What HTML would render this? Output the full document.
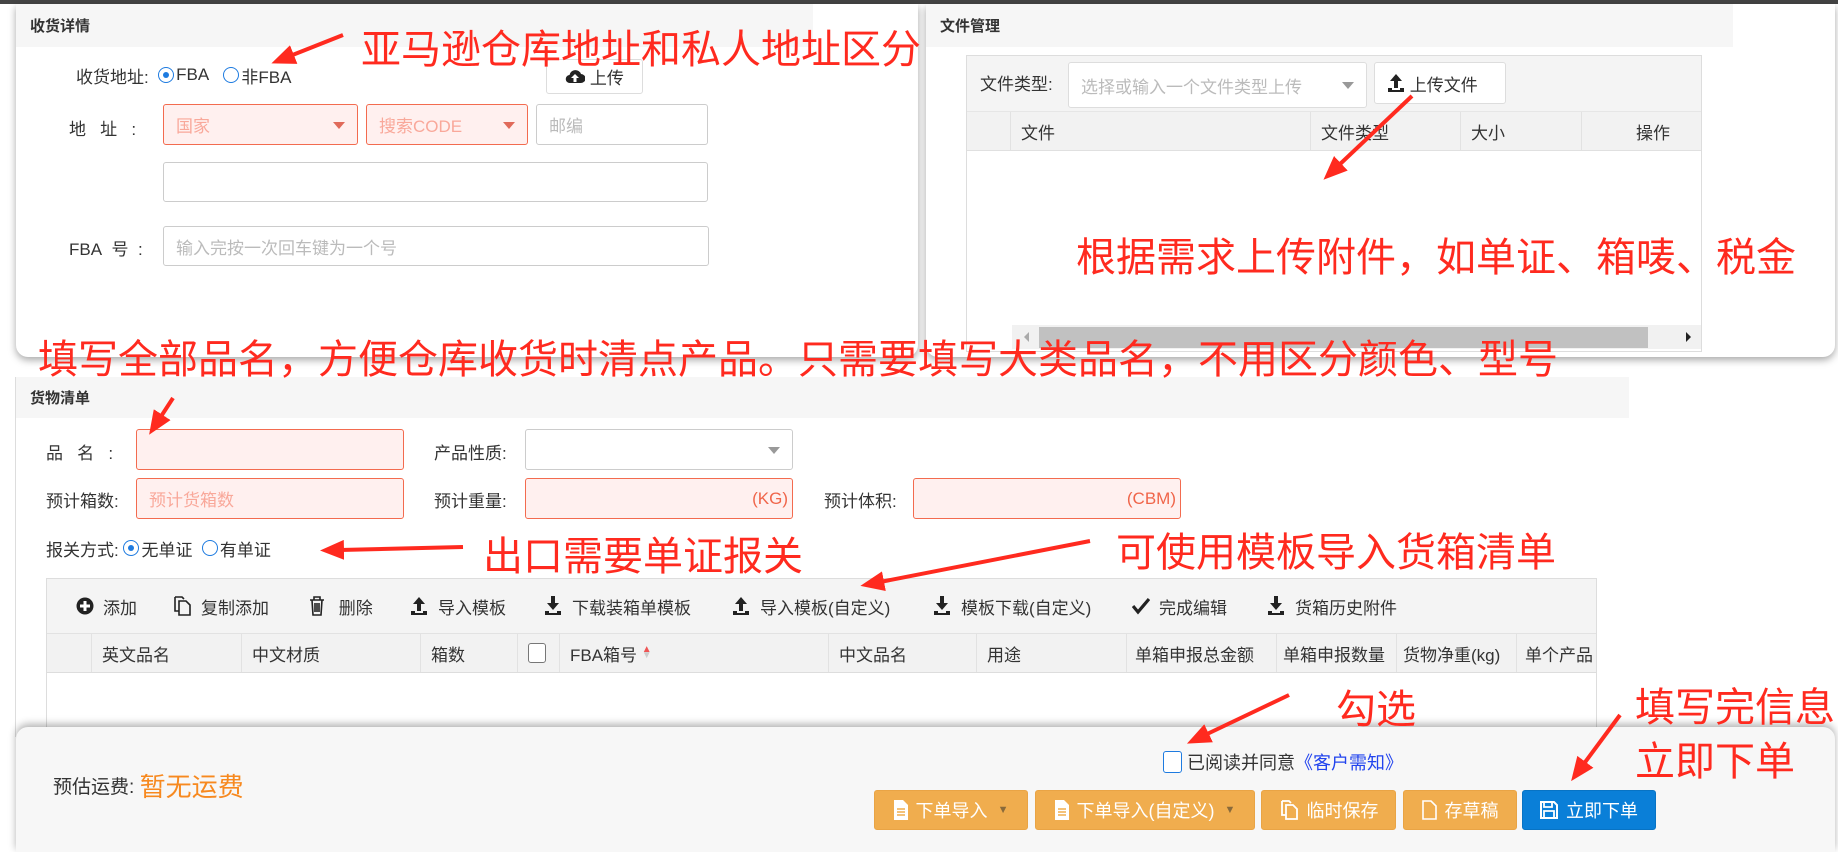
<!DOCTYPE html>
<html><head><meta charset="utf-8"><style>
*{box-sizing:border-box;margin:0;padding:0}
body{width:1838px;height:847px;position:relative;overflow:hidden;background:#fff;font-family:"Liberation Sans","Noto Sans CJK SC",sans-serif;font-size:17px;color:#333}
.a{position:absolute}
.card{position:absolute;background:#fff;border-radius:0 0 12px 12px;box-shadow:0 3px 8px rgba(0,0,0,.35)}
.hd{position:absolute;background:#f6f6f6;font-size:15px;font-weight:bold;color:#333;padding-left:14px;display:flex;align-items:center}
.inp{position:absolute;border:1px solid #ccc;border-radius:3px;background:#fff;color:#bbb;font-size:17px;display:flex;align-items:center;padding-left:12px;white-space:nowrap}
.err{border-color:#f36b4f;background:#fff0ef;color:#f9a89a}
.caret{position:absolute;right:12px;top:50%;margin-top:-3px;width:0;height:0;border-left:6px solid transparent;border-right:6px solid transparent;border-top:7px solid #999}
.err .caret{border-top-color:#e06a5a}
.rad{display:inline-block;width:16px;height:16px;border:1.5px solid #1e7be0;border-radius:50%;vertical-align:-2px;margin-right:2px;position:relative}
.rad.on::after{content:"";position:absolute;left:3.5px;top:3.5px;width:6px;height:6px;border-radius:50%;background:#1e7be0}
.red{position:absolute;color:#ff2a1f;font-size:40px;white-space:nowrap;line-height:1}
.th{position:absolute;top:0;height:100%;border-left:1px solid #e2e2e2;display:flex;align-items:center;padding-left:10px;font-size:17px;color:#333;white-space:nowrap}
.tb{position:absolute;font-size:17px;color:#333;display:flex;align-items:center;white-space:nowrap}
.tb svg{margin-right:9px}
.btn{position:absolute;top:790px;height:40px;background:#f0ad4e;border:1px solid #e9a445;border-radius:3px;color:#fff;font-size:18px;display:flex;align-items:center;justify-content:center;white-space:nowrap}
.btn svg{margin-right:8px}
</style></head><body>
<div class="a" style="left:0;top:0;width:1838px;height:4px;background:#444"></div>

<div class="card" style="left:16px;top:4px;width:902px;height:353px"></div>
<div class="hd" style="left:16px;top:4px;width:797px;height:43px">收货详情</div>
<div class="tb" style="left:76px;top:64px;height:22px">收货地址:&nbsp;&nbsp;<span class="rad on"></span>FBA&nbsp;&nbsp;&nbsp;<span class="rad"></span>非FBA</div>
<div class="inp" style="left:546px;top:59px;width:97px;height:35px;color:#333;justify-content:center;padding:0;border-color:#ddd"><svg width="20" height="18" viewBox="0 0 20 18"><path d="M5 15a4 4 0 0 1-.5-8A6 6 0 0 1 16 6a4.5 4.5 0 0 1 0 9z" fill="#222"/><path d="M10 6l-4 4h2.5v4h3v-4H14z" fill="#fff"/></svg>&nbsp;上传</div>
<div class="tb" style="left:69px;top:116px;height:22px">地&nbsp;&nbsp;&nbsp;址&nbsp;&nbsp;&nbsp;:</div>
<div class="inp err" style="left:163px;top:104px;width:195px;height:41px">国家<span class="caret"></span></div>
<div class="inp err" style="left:366px;top:104px;width:162px;height:41px">搜索CODE<span class="caret"></span></div>
<div class="inp" style="left:536px;top:104px;width:172px;height:41px">邮编</div>
<div class="inp" style="left:163px;top:162px;width:545px;height:40px"></div>
<div class="tb" style="left:69px;top:236px;height:22px">FBA&nbsp;&nbsp;号&nbsp;&nbsp;:</div>
<div class="inp" style="left:163px;top:226px;width:546px;height:40px">输入完按一次回车键为一个号</div>

<div class="card" style="left:926px;top:4px;width:909px;height:353px"></div>
<div class="hd" style="left:926px;top:4px;width:807px;height:43px">文件管理</div>
<div class="a" style="left:966px;top:55px;width:736px;height:297px;border:1px solid #ddd;background:#fff"></div>
<div class="a" style="left:967px;top:56px;width:734px;height:55px;background:#f4f4f4"></div>
<div class="tb" style="left:980px;top:71px;height:22px">文件类型:</div>
<div class="inp" style="left:1068px;top:62px;width:299px;height:46px;border-color:#ddd">选择或输入一个文件类型上传<span class="caret"></span></div>
<div class="inp" style="left:1374px;top:62px;width:132px;height:42px;color:#333;border-color:#ddd;background:#fff"><svg width="18" height="20" viewBox="0 0 18 20"><path d="M9 1L3 8h4v7h4V8h4z" fill="#222"/><path d="M1 15h4v2h8v-2h4v4H1z" fill="#222"/></svg>&nbsp;上传文件</div>
<div class="a" style="left:967px;top:111px;width:734px;height:40px;background:#f2f2f2;border-top:1px solid #e6e6e6;border-bottom:1px solid #e0e0e0">
<div class="th" style="left:43px;width:300px">文件</div><div class="th" style="left:343px;width:150px">文件类型</div><div class="th" style="left:493px;width:121px">大小</div><div class="th" style="left:614px;width:120px;padding-left:54px">操作</div></div>
<div class="a" style="left:1012px;top:325px;width:689px;height:24px;background:#f1f1f1"></div>
<div class="a" style="left:1039px;top:327px;width:609px;height:21px;background:#c1c1c1"></div>
<div class="a" style="left:1024px;top:332px;border-top:5px solid transparent;border-bottom:5px solid transparent;border-right:5px solid #aaa"></div>
<div class="a" style="left:1686px;top:332px;border-top:5px solid transparent;border-bottom:5px solid transparent;border-left:5px solid #222"></div>

<div class="a" style="left:15px;top:377px;width:1px;height:360px;background:#ddd"></div>
<div class="hd" style="left:16px;top:377px;width:1613px;height:41px">货物清单</div>
<div class="tb" style="left:46px;top:440px;height:22px">品&nbsp;&nbsp;&nbsp;名&nbsp;&nbsp;&nbsp;:</div>
<div class="inp err" style="left:136px;top:429px;width:268px;height:41px"></div>
<div class="tb" style="left:434px;top:440px;height:22px">产品性质:</div>
<div class="inp" style="left:525px;top:429px;width:268px;height:41px"><span class="caret"></span></div>
<div class="tb" style="left:46px;top:488px;height:22px">预计箱数:</div>
<div class="inp err" style="left:136px;top:478px;width:268px;height:41px">预计货箱数</div>
<div class="tb" style="left:434px;top:488px;height:22px">预计重量:</div>
<div class="inp err" style="left:525px;top:478px;width:268px;height:41px;justify-content:flex-end;padding-right:4px;color:#f0654a">(KG)</div>
<div class="tb" style="left:824px;top:488px;height:22px">预计体积:</div>
<div class="inp err" style="left:913px;top:478px;width:268px;height:41px;justify-content:flex-end;padding-right:4px;color:#f0654a">(CBM)</div>
<div class="tb" style="left:46px;top:537px;height:22px">报关方式:&nbsp;<span class="rad on"></span>无单证&nbsp;&nbsp;<span class="rad"></span>有单证</div>

<div class="a" style="left:46px;top:578px;width:1551px;height:160px;border:1px solid #ddd;background:#fff"></div>
<div class="a" style="left:47px;top:579px;width:1549px;height:54px;background:#f4f4f4"></div>
<div class="tb" style="left:76px;top:594px;height:24px"><svg width="18" height="18" viewBox="0 0 18 18"><circle cx="9" cy="9" r="8.5" fill="#222"/><path d="M9 4v10M4 9h10" stroke="#fff" stroke-width="3"/></svg>添加</div>
<div class="tb" style="left:172px;top:594px;height:24px"><svg width="20" height="20" viewBox="0 0 20 20"><path d="M7 5h7l4 4v10H7z M3 1h7l2 2M3 1v14h4" fill="none" stroke="#222" stroke-width="1.6"/></svg>复制添加</div>
<div class="tb" style="left:309px;top:594px;height:24px"><svg width="16" height="20" viewBox="0 0 16 20"><path d="M1 4h14M5 4V1h6v3M3 4l1 15h8l1-15M6 7v9M8 7v9M10 7v9" fill="none" stroke="#222" stroke-width="1.6"/></svg>&nbsp;删除</div>
<div class="tb" style="left:409px;top:594px;height:24px"><svg width="20" height="20" viewBox="0 0 18 20"><path d="M9 1L3 8h4v7h4V8h4z" fill="#222"/><path d="M1 15h4v2h8v-2h4v4H1z" fill="#222"/></svg>导入模板</div>
<div class="tb" style="left:543px;top:594px;height:24px"><svg width="20" height="20" viewBox="0 0 18 20"><path d="M9 14L3 7h4V0h4v7h4z" fill="#222"/><path d="M1 15h4v2h8v-2h4v4H1z" fill="#222"/></svg>下载装箱单模板</div>
<div class="tb" style="left:731px;top:594px;height:24px"><svg width="20" height="20" viewBox="0 0 18 20"><path d="M9 1L3 8h4v7h4V8h4z" fill="#222"/><path d="M1 15h4v2h8v-2h4v4H1z" fill="#222"/></svg>导入模板(自定义)</div>
<div class="tb" style="left:932px;top:594px;height:24px"><svg width="20" height="20" viewBox="0 0 18 20"><path d="M9 14L3 7h4V0h4v7h4z" fill="#222"/><path d="M1 15h4v2h8v-2h4v4H1z" fill="#222"/></svg>模板下载(自定义)</div>
<div class="tb" style="left:1132px;top:594px;height:24px"><svg width="18" height="18" viewBox="0 0 18 18"><path d="M1 9l5 6L17 2" fill="none" stroke="#222" stroke-width="3.2"/></svg>完成编辑</div>
<div class="tb" style="left:1266px;top:594px;height:24px"><svg width="20" height="20" viewBox="0 0 18 20"><path d="M9 14L3 7h4V0h4v7h4z" fill="#222"/><path d="M1 15h4v2h8v-2h4v4H1z" fill="#222"/></svg>货箱历史附件</div>
<div class="a" style="left:47px;top:633px;width:1549px;height:40px;background:#f2f2f2;border-top:1px solid #e2e2e2;border-bottom:1px solid #ddd;overflow:hidden">
<div class="th" style="left:44px;width:150px">英文品名</div>
<div class="th" style="left:194px;width:179px">中文材质</div>
<div class="th" style="left:373px;width:97px">箱数</div>
<div class="th" style="left:470px;width:42px"><span style="width:18px;height:20px;border:1px solid #777;border-radius:3px;background:#fff;display:inline-block"></span></div>
<div class="th" style="left:512px;width:269px">FBA箱号&nbsp;<span style="font-size:10px;line-height:6px;display:inline-block"><span style="color:#e55">▲</span><br><span style="color:#ccc">▼</span></span></div>
<div class="th" style="left:781px;width:148px">中文品名</div>
<div class="th" style="left:929px;width:150px">用途</div>
<div class="th" style="left:1079px;width:150px;padding-left:8px">单箱申报总金额</div>
<div class="th" style="left:1229px;width:120px;padding-left:6px">单箱申报数量</div>
<div class="th" style="left:1349px;width:120px;padding-left:6px">货物净重(kg)</div>
<div class="th" style="left:1469px;width:120px;padding-left:8px">单个产品</div>
</div>

<div class="a" style="left:16px;top:727px;width:1819px;height:125px;background:#f7f7f7;border-radius:12px 12px 0 0;box-shadow:0 -3px 8px rgba(0,0,0,.3)"></div>
<div class="tb" style="left:53px;top:770px;height:30px;font-size:19px">预估运费:&nbsp;<span style="color:#f7891f;font-size:26px">暂无运费</span></div>
<div class="tb" style="left:1163px;top:749px;height:26px;font-size:18px"><span style="width:19px;height:22px;border:1.5px solid #1e7be0;border-radius:3px;display:inline-block;margin-right:5px;background:#fff"></span>已阅读并同意 <span style="color:#2244ee">《客户需知》</span></div>
<div class="btn" style="left:874px;width:154px"><svg width="14" height="20" viewBox="0 0 14 20"><path d="M0 0h9l5 5v15H0z" fill="#fff"/><path d="M3 9h8M3 12h8M3 15h8" stroke="#f0ad4e" stroke-width="1.4"/></svg>下单导入&nbsp;&nbsp;<span style="font-size:11px;color:#8a6a3a">▼</span></div>
<div class="btn" style="left:1035px;width:220px"><svg width="14" height="20" viewBox="0 0 14 20"><path d="M0 0h9l5 5v15H0z" fill="#fff"/><path d="M3 9h8M3 12h8M3 15h8" stroke="#f0ad4e" stroke-width="1.4"/></svg>下单导入(自定义)&nbsp;&nbsp;<span style="font-size:11px;color:#8a6a3a">▼</span></div>
<div class="btn" style="left:1261px;width:135px"><svg width="20" height="20" viewBox="0 0 20 20"><path d="M7 5h7l4 4v10H7z M3 1h7l2 2M3 1v14h4" fill="none" stroke="#fff" stroke-width="1.8"/></svg>临时保存</div>
<div class="btn" style="left:1403px;width:114px"><svg width="15" height="20" viewBox="0 0 15 20"><path d="M1 1h8l5 5v13H1z" fill="none" stroke="#fff" stroke-width="1.6"/></svg>存草稿</div>
<div class="btn" style="left:1522px;width:134px;background:#0a7fd8;border-color:#0873c4"><svg width="18" height="18" viewBox="0 0 18 18"><path d="M1 1h13l3 3v13H1z" fill="none" stroke="#fff" stroke-width="2"/><path d="M4 1v5h8V1M4 10h10v7H4z" fill="none" stroke="#fff" stroke-width="1.8"/></svg>立即下单</div>

<div class="red" style="left:361px;top:30px">亚马逊仓库地址和私人地址区分</div>
<div class="red" style="left:1076px;top:238px">根据需求上传附件，如单证、箱唛、税金</div>
<div class="red" style="left:38px;top:340px">填写全部品名，方便仓库收货时清点产品。只需要填写大类品名，不用区分颜色、型号</div>
<div class="red" style="left:483px;top:537px">出口需要单证报关</div>
<div class="red" style="left:1116px;top:533px">可使用模板导入货箱清单</div>
<div class="red" style="left:1336px;top:690px">勾选</div>
<div class="red" style="left:1635px;top:688px">填写完信息</div>
<div class="red" style="left:1635px;top:742px">立即下单</div>
<svg class="a" style="left:0;top:0" width="1838" height="847">
<defs><marker id="m" markerWidth="6" markerHeight="5" refX="1" refY="2.5" orient="auto"><path d="M0 0L6 2.5L0 5z" fill="#ff2a1f"/></marker></defs>
<g stroke="#ff2a1f" stroke-width="4" marker-end="url(#m)" fill="none">
<line x1="343" y1="35" x2="290" y2="56"/>
<line x1="1412" y1="96" x2="1338" y2="166"/>
<line x1="173" y1="398" x2="160" y2="418"/>
<line x1="463" y1="547" x2="340" y2="550"/>
<line x1="1090" y1="541" x2="880" y2="582"/>
<line x1="1289" y1="695" x2="1205" y2="735"/>
<line x1="1620" y1="715" x2="1583" y2="765"/>
</g></svg>
</body></html>
